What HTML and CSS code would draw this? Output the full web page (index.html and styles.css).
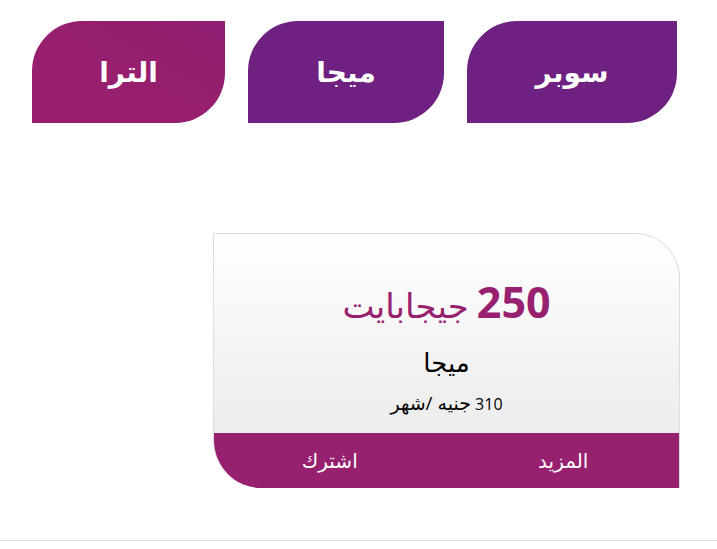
FILE: index.html
```html
<!DOCTYPE html>
<html lang="ar" dir="rtl">
<head>
<meta charset="utf-8">
<title>باقات</title>
<link rel="stylesheet" href="styles.css">
</head>
<body>
<div class="page">
  <nav class="tabs">
    <div class="tab tab-super">سوبر</div>
    <div class="tab tab-mega">ميجا</div>
    <div class="tab tab-ultra">الترا</div>
  </nav>
  <section class="card">
    <div class="card-body">
      <div class="amount"><span class="num">250</span> <span class="unit">جيجابايت</span></div>
      <div class="name">ميجا</div>
      <div class="price"><span class="price-num">310</span> <span class="price-unit">جنيه /شهر</span></div>
    </div>
    <div class="card-foot">
      <span class="foot-link">المزيد</span>
      <span class="foot-link">اشترك</span>
    </div>
  </section>
</div>
<div class="rule"></div>
</body>
</html>
```
FILE: styles.css
```css
html, body {
  margin: 0;
  padding: 0;
  background: #fff;
}
body {
  font-family: "Open Sans", "DejaVu Sans", sans-serif;
  direction: rtl;
  width: 717px;
  height: 549px;
  overflow: hidden;
}
.page {
  padding: 21px 40px 0 0;
}
.tabs {
  display: flex;
  gap: 23px;
}
.tab {
  height: 102px;
  display: flex;
  align-items: center;
  justify-content: center;
  color: #fff;
  font-weight: bold;
  font-size: 28px;
  padding-bottom: 3px;
  box-sizing: border-box;
  border-radius: 50px 0 50px 0;
  background: #6e2180;
}
.tab-super { width: 210px; }
.tab-mega { width: 196px; }
.tab-ultra {
  width: 193px;
  background: linear-gradient(30deg, #991f6c 0%, #961f6e 60%, #8f1f72 100%);
}
.card {
  width: 467px;
  margin: 110px -3px 0 0;
  box-sizing: border-box;
  border: 1px solid #ddd;
  border-bottom: none;
  border-radius: 0 45px 0 48px;
  overflow: hidden;
  background: linear-gradient(#fff, #ececec 200px);
}
.card-body {
  height: 199px;
  box-sizing: border-box;
  padding-top: 43px;
  text-align: center;
}
.amount {
  color: #97206f;
  line-height: 50px;
}
.num {
  font-size: 43px;
  font-weight: bold;
  margin-left: 4px;
}
.unit {
  font-size: 34px;
}
.name {
  font-size: 26px;
  color: #000;
  line-height: 34px;
  margin-top: 8px;
}
.price {
  color: #000;
  line-height: 24px;
  margin-top: 12px;
}
.price-num {
  font-size: 16px;
}
.price-unit {
  font-size: 19px;
}
.card-foot {
  display: flex;
  height: 55px;
  background: #97206f;
  margin: 0 -1px;
}
.foot-link {
  flex: 1;
  display: flex;
  align-items: center;
  justify-content: center;
  color: #fff;
  font-size: 20px;
}
.rule {
  margin-top: 52px;
  border-top: 1px solid #ddd;
}
```
